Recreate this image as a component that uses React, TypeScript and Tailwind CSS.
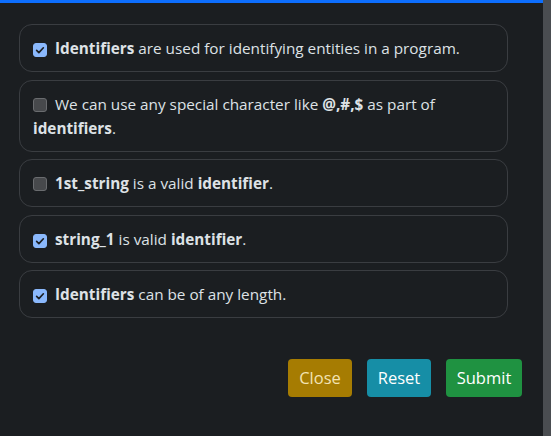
import React, { useState } from "react";

interface Statement {
  id: number;
  checked: boolean;
  text: React.ReactNode;
}

const initial: Statement[] = [
  {
    id: 1,
    checked: true,
    text: (
      <>
        <b>Identifiers</b> are used for identifying entities in a program.
      </>
    ),
  },
  {
    id: 2,
    checked: false,
    text: (
      <>
        We can use any special character like <b>@,#,$</b> as part of <b>identifiers</b>.
      </>
    ),
  },
  {
    id: 3,
    checked: false,
    text: (
      <>
        <b>1st_string</b> is a valid <b>identifier</b>.
      </>
    ),
  },
  {
    id: 4,
    checked: true,
    text: (
      <>
        <b>string_1</b> is valid <b>identifier</b>.
      </>
    ),
  },
  {
    id: 5,
    checked: true,
    text: (
      <>
        <b>Identifiers</b> can be of any length.
      </>
    ),
  },
];

function Check({ checked, onClick }: { checked: boolean; onClick: () => void }) {
  return (
    <span
      onClick={onClick}
      className={
        "inline-flex items-center justify-center w-[14px] h-[14px] rounded-[3px] mr-[8px] align-[-2px] cursor-pointer " +
        (checked ? "bg-[#8ab8fc] border border-[#8ab8fc]" : "bg-[#47494c] border border-[#6a6c6f]")
      }
    >
      {checked && (
        <svg viewBox="0 0 16 16" className="w-[12px] h-[12px]">
          <path
            d="M3.5 8.5l3 3 6-6.5"
            fill="none"
            stroke="#1b1e21"
            strokeWidth="2.2"
            strokeLinecap="round"
            strokeLinejoin="round"
          />
        </svg>
      )}
    </span>
  );
}

export default function App() {
  const [items, setItems] = useState(initial);

  const toggle = (id: number) =>
    setItems(items.map((it) => (it.id === id ? { ...it, checked: !it.checked } : it)));

  return (
    <div className="flex w-[551px] h-[436px] bg-[#1b1e21] font-['Open_Sans',sans-serif] text-[#dee2e6]">
      <div className="flex flex-col w-[543px]">
        <div className="h-[3px] bg-[#0d6efd]" />
        <div className="flex flex-col gap-[7.5px] pl-[19px] pr-[35px] pt-[21px]">
          {items.map((it) => (
            <div
              key={it.id}
              className="border border-[#3a3d41] rounded-[13px] px-[13px] py-[11px] text-[15.3px] leading-[24px]"
            >
              <Check checked={it.checked} onClick={() => toggle(it.id)} />
              {it.text}
            </div>
          ))}
        </div>
        <div className="flex justify-end gap-[15px] pr-[21px] mt-[41px]">
          <button className="h-[38px] w-[64px] rounded-[4px] bg-[#a67c02] text-[#f3e3b4] text-[16.5px]">
            Close
          </button>
          <button className="h-[38px] w-[64px] rounded-[4px] bg-[#168ea6] text-white text-[16.5px]">
            Reset
          </button>
          <button className="h-[38px] w-[76px] rounded-[4px] bg-[#1f9241] text-white text-[16.5px]">
            Submit
          </button>
        </div>
      </div>
      <div className="w-[8px] bg-[#4a4d51]" />
    </div>
  );
}
